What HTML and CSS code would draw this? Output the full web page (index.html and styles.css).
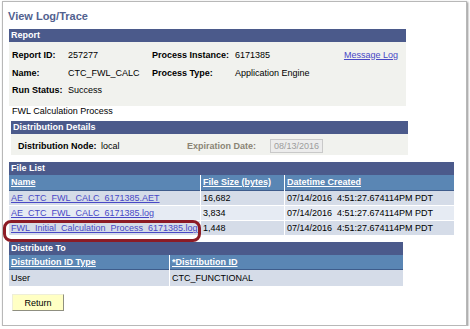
FILE: index.html
```html
<!DOCTYPE html>
<html lang="en">
<head>
    <meta charset="UTF-8">
    <meta name="viewport" content="width=device-width, initial-scale=1.0">
    <title>View Log/Trace</title>
    <link rel="stylesheet" href="styles.css">
</head>
<body>

    <div class="page">
        <h1 class="title">View Log/Trace</h1>

        <div class="box report">
            <div class="box-head">Report</div>
            <div class="report-body">
                <span class="lbl">Report ID:</span>
                <span>257277</span>
                <span class="lbl">Process Instance:</span>
                <span>6171385</span>
                <a class="link msg" href="#">Message Log</a>

                <span class="lbl">Name:</span>
                <span>CTC_FWL_CALC</span>
                <span class="lbl">Process Type:</span>
                <span>Application Engine</span>
                <span></span>

                <span class="lbl">Run Status:</span>
                <span>Success</span>
            </div>
        </div>

        <div class="desc">FWL Calculation Process</div>

        <div class="box dist">
            <div class="box-head">Distribution Details</div>
            <div class="dist-body">
                <span class="lbl node-lbl">Distribution Node:</span>
                <span class="node-val">local</span>
                <span class="lbl exp-lbl">Expiration Date:</span>
                <span class="exp-input">08/13/2016</span>
            </div>
        </div>

        <div class="box files">
            <div class="box-head">File List</div>
            <div class="grid files-grid">
                <a class="th" href="#">Name</a>
                <a class="th" href="#">File Size (bytes)</a>
                <a class="th" href="#">Datetime Created</a>

                <div class="td odd"><a class="link" href="#">AE_CTC_FWL_CALC_6171385.AET</a></div>
                <div class="td odd">16,682</div>
                <div class="td odd">07/14/2016&nbsp; 4:51:27.674114PM PDT</div>

                <div class="td even"><a class="link" href="#">AE_CTC_FWL_CALC_6171385.log</a></div>
                <div class="td even">3,834</div>
                <div class="td even">07/14/2016&nbsp; 4:51:27.674114PM PDT</div>

                <div class="td odd hl"><a class="link" href="#">FWL_Initial_Calculation_Process_6171385.log</a><span class="marker"></span></div>
                <div class="td odd">1,448</div>
                <div class="td odd">07/14/2016&nbsp; 4:51:27.674114PM PDT</div>
            </div>
        </div>

        <div class="box dest">
            <div class="box-head">Distribute To</div>
            <div class="grid dest-grid">
                <a class="th" href="#">Distribution ID Type</a>
                <a class="th" href="#">*Distribution ID</a>

                <div class="td odd tall">User</div>
                <div class="td odd tall">CTC_FUNCTIONAL</div>
            </div>
        </div>

        <button class="return">Return</button>
    </div>

</body>
</html>
```

FILE: styles.css
```css
body {
    margin: 0;
    font-family: "Liberation Sans", Arial, sans-serif;
    font-size: 9px;
    color: #000;
    background: #fff;
}
.page {
    position: relative;
    margin: 1px 0 0 2px;
    width: 463px;
    height: 323px;
    border: 1px solid #b8b8b8;
    box-shadow: 1px 1px 2px rgba(0, 0, 0, 0.45);
    background: #fff;
}
.title {
    margin: 8px 0 6px 5px;
    font-size: 11px;
    line-height: 13px;
    font-weight: bold;
    color: #52618f;
}
.box {
    margin-left: 6px;
}
.box-head {
    height: 13px;
    line-height: 13px;
    padding-left: 2px;
    background: #4b5a8b;
    color: #fff;
    font-weight: bold;
}
.lbl {
    font-weight: bold;
}
.link {
    color: #4848c6;
    text-decoration: underline;
}
.report {
    width: 397px;
}
.report-body {
    display: grid;
    grid-template-columns: 56px 84px 83px 1fr auto;
    grid-template-rows: 18px 18px 17px;
    align-items: center;
    padding: 4px 8px 7px 3px;
    line-height: 11px;
    background: #f1f2ee;
}
.desc {
    margin: 0 0 5px 9px;
    line-height: 10px;
}
.dist {
    width: 397px;
    margin: 0 0 7px 8px;
}
.dist-body {
    display: flex;
    align-items: center;
    padding: 5px 0 2px 7px;
    line-height: 11px;
    background: #f1f2ee;
}
.node-lbl {
    width: 83px;
}
.node-val {
    width: 86px;
}
.exp-lbl {
    width: 83px;
    color: #8a8474;
}
.exp-input {
    box-sizing: border-box;
    width: 53px;
    height: 14px;
    line-height: 12px;
    padding-left: 3px;
    border: 1px solid #c9c9c9;
    background: #ececec;
    color: #9c9c9c;
}
.files {
    width: 445px;
}
.grid {
    display: grid;
    column-gap: 1px;
    background: #fff;
}
.files-grid {
    grid-template-columns: 191px 83px 169px;
}
.th {
    box-sizing: border-box;
    height: 16px;
    line-height: 15px;
    padding-left: 2px;
    border-bottom: 1px solid #3e5c8b;
    background: #5a86b4;
    color: #fff;
    font-weight: bold;
    text-decoration: underline;
    white-space: nowrap;
}
.td {
    box-sizing: border-box;
    height: 15px;
    line-height: 14px;
    padding-left: 2px;
    border-bottom: 1px solid #fff;
    white-space: nowrap;
}
.odd {
    background: #d5dce8;
}
.even {
    background: #e6ebf3;
}
.hl {
    position: relative;
}
.marker {
    position: absolute;
    left: -6px;
    top: -1px;
    box-sizing: border-box;
    width: 198px;
    height: 22px;
    border: 3px solid #8c1b25;
    border-radius: 8px;
}
.dest {
    width: 394px;
    margin-top: 6px;
}
.dest-grid {
    grid-template-columns: 160px 233px;
}
.dest-grid .th {
    height: 15px;
    line-height: 14px;
}
.tall {
    height: 16px;
    line-height: 16px;
    border-bottom: none;
}
.return {
    display: block;
    box-sizing: border-box;
    width: 52px;
    height: 17px;
    margin: 8px 0 0 9px;
    padding: 0;
    font-family: "Liberation Sans", Arial, sans-serif;
    font-size: 9px;
    color: #000;
    background: #ffffc4;
    border: 1px solid;
    border-color: #eeeed8 #8f8f80 #8f8f80 #eeeed8;
}
```
